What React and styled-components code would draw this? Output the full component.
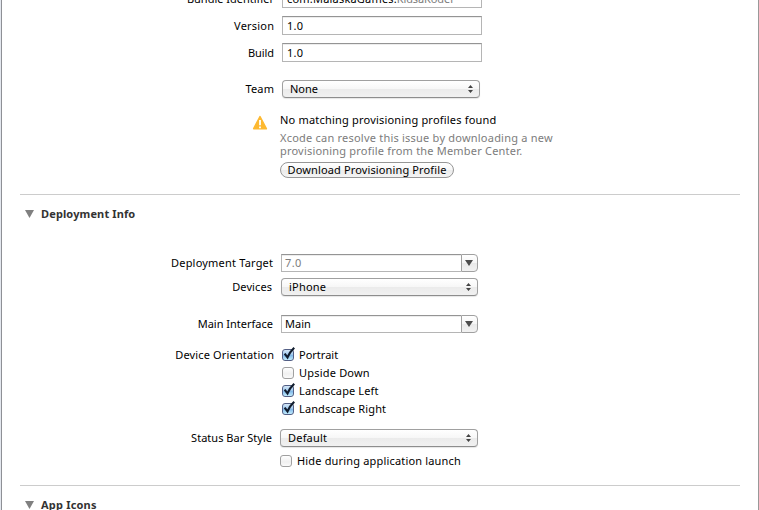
import React from "react";
import styled, { createGlobalStyle } from "styled-components";

const GlobalStyle = createGlobalStyle`
  *, *::before { box-sizing: border-box; }
  body {
    margin: 0;
    overflow: hidden;
    background: #fff;
    color: #000;
    font: 11px/14px "Noto Sans", "Open Sans", sans-serif;
  }
`;

const Gutter = styled.div`
  width: 759px;
  padding-left: 1px;
  background: #e3e7ee;
`;

const Editor = styled.main`
  width: 758px;
  height: 510px;
  overflow: hidden;
  padding: 0 18px;
  background: #fff;
  border-left: 1px solid #8e9096;
  border-right: 1px solid #999;
`;

const Row = styled.div`
  display: flex;
  align-items: ${(p) => (p.$top ? "flex-start" : "center")};
  height: ${(p) => p.$height || 19}px;
  margin-top: ${(p) => p.$gap || 0}px;
`;

const Label = styled.div`
  flex: none;
  width: ${(p) => p.$end - 20}px;
  margin-right: ${(p) => p.$space}px;
  line-height: 18px;
  text-align: right;
  white-space: nowrap;
`;

const Text = styled.span`
  letter-spacing: ${(p) => p.$track ?? 0.2}px;
  margin-right: ${(p) => -(p.$track ?? 0.2)}px;
  color: ${(p) => (p.$muted ? "#7c7c7c" : "inherit")};
  white-space: nowrap;
`;

const Field = styled.div`
  display: flex;
  align-items: center;
  width: 200px;
  height: 19px;
  padding-left: 4px;
  background: #fff;
  border: 1px solid #b5b5b5;
  border-top-color: #949494;
  box-shadow: inset 0 1px #ededed;
`;

const Popup = styled.div`
  display: flex;
  align-items: center;
  justify-content: space-between;
  width: ${(p) => p.$width}px;
  height: 18px;
  padding: 0 6px 0 7px;
  border: 1px solid #a0a0a0;
  border-bottom-color: #8d8d8d;
  border-radius: 4px;
  background: linear-gradient(#fff 0%, #f7f7f7 48%, #ebebeb 52%, #f1f1f1 100%);
  box-shadow: 0 1px 1px rgba(0, 0, 0, 0.1);
`;

const Combo = styled.div`
  display: flex;
  width: 197px;
  height: 18px;
`;

const ComboText = styled.div`
  display: flex;
  align-items: center;
  flex: 1;
  padding-left: 3px;
  border: 1px solid #b5b5b5;
  border-top-color: #949494;
  border-right: 0;
  box-shadow: inset 0 1px #ededed;
`;

const ComboButton = styled.div`
  display: flex;
  align-items: center;
  width: 17px;
  padding-left: 3px;
  border: 1px solid #a0a0a0;
  border-radius: 0 4px 4px 0;
  background: linear-gradient(#fff 0%, #f6f6f6 48%, #e9e9e9 52%, #f2f2f2 100%);
`;

const Notice = styled.section`
  display: flex;
  height: 65px;
  margin: 15px 0 0 232px;
`;

const NoticeIcon = styled.div`
  width: 28px;
  padding-top: 2px;
  svg { display: block; }
`;

const NoticeBody = styled.div`
  width: 300px;
`;

const Title = styled.div`
  height: 18px;
`;

const Detail = styled.div`
  height: 13px;
  line-height: 13px;
`;

const PushButton = styled.button`
  display: flex;
  align-items: center;
  justify-content: center;
  width: 174px;
  height: 16px;
  margin-top: 5px;
  padding: 0;
  font: inherit;
  color: #000;
  border: 1px solid #969696;
  border-radius: 8px;
  background: linear-gradient(#fff 0%, #f7f7f7 48%, #ebebeb 52%, #f4f4f4 100%);
`;

const Divider = styled.hr`
  width: 720px;
  height: 1px;
  margin: ${(p) => p.$gap}px 0 0;
  border: 0;
  background: #ccc;
`;

const Heading = styled.h2`
  display: flex;
  align-items: center;
  gap: 7px;
  height: 16px;
  margin: 11px 0 0;
  padding-left: 5px;
  font-size: 11px;
  font-weight: 700;
  color: #333;
`;

const Options = styled.div`
  display: flex;
  flex-direction: column;
`;

const Option = styled.div`
  display: flex;
  align-items: center;
  gap: 5px;
  height: 18px;
`;

const Box = styled.span`
  flex: none;
  width: 12px;
  height: 12px;
  border: 1px solid ${(p) => (p.$on ? "#535f85" : "#a0a0a0")};
  border-radius: 3px;
  background: ${(p) =>
    p.$on
      ? "linear-gradient(#d4e7f7 0%, #9dc7ed 48%, #80b6e7 52%, #c2eeff 100%)"
      : "linear-gradient(#fff, #f0f0f0 60%, #fafafa)"};
  svg { display: block; margin-top: -3px; overflow: visible; }
`;

const Updown = () => (
  <svg width="5" height="8" viewBox="0 0 5 8" fill="#444">
    <path d="M2.5 0 5 3H0zM0 5h5L2.5 8z" />
  </svg>
);

const Down = ({ width = 8, height = 6, color = "#4c4c4c" }) => (
  <svg width={width} height={height} viewBox="0 0 10 8" preserveAspectRatio="none" fill={color}>
    <path d="M0 0h10L5 8z" />
  </svg>
);

const Warning = () => (
  <svg width="16" height="16" viewBox="0 0 16 16">
    <path d="M8 1.8 14.2 13.6H1.8z" fill="#fdb931" stroke="#fdb931" strokeWidth="1.8" strokeLinejoin="round" />
    <path d="M8 5v5.2M8 11.4v1.8" stroke="#fff" strokeWidth="1.8" />
  </svg>
);

const Check = ({ on, track, children }) => (
  <Option>
    <Box $on={on}>
      {on && (
        <svg width="12" height="12" viewBox="0 0 12 12">
          <path d="M1.6 6.6 4.5 10.4Q6.7 5.1 11.2 0.8" fill="none" stroke="#101c2d" strokeWidth="2.2" />
        </svg>
      )}
    </Box>
    <Text $track={track}>{children}</Text>
  </Option>
);

const Section = ({ track, children }) => (
  <Heading>
    <Down width={9} height={8} color="#808080" />
    <Text $track={track}>{children}</Text>
  </Heading>
);

export default function App() {
  return (
    <>
      <GlobalStyle />
      <Gutter>
        <Editor>
          <Row $gap={-11}>
            <Label $end={274} $space={8}><Text $track={0}>Bundle Identifier</Text></Label>
            <Field><Text>com.MalaskaGames.</Text><Text $muted $track={-0.1}>KidsaKoder</Text></Field>
          </Row>
          <Row $gap={8}>
            <Label $end={274} $space={8}><Text>Version</Text></Label>
            <Field><Text>1.0</Text></Field>
          </Row>
          <Row $gap={8}>
            <Label $end={274} $space={8}><Text $track={-0.1}>Build</Text></Label>
            <Field><Text>1.0</Text></Field>
          </Row>
          <Row $gap={18} $height={18}>
            <Label $end={274} $space={8}><Text>Team</Text></Label>
            <Popup $width={198}><Text $track={0}>None</Text><Updown /></Popup>
          </Row>
          <Notice>
            <NoticeIcon><Warning /></NoticeIcon>
            <NoticeBody>
              <Title><Text>No matching provisioning profiles found</Text></Title>
              <Detail><Text $muted $track={0.22}>Xcode can resolve this issue by downloading a new</Text></Detail>
              <Detail><Text $muted>provisioning profile from the Member Center.</Text></Detail>
              <PushButton><Text $track={0.13}>Download Provisioning Profile</Text></PushButton>
            </NoticeBody>
          </Notice>
          <Divider $gap={16} />
          <Section track={0.13}>Deployment Info</Section>
          <Row $gap={32} $height={18}>
            <Label $end={273} $space={8}><Text>Deployment Target</Text></Label>
            <Combo><ComboText><Text $muted $track={0.4}>7.0</Text></ComboText><ComboButton><Down /></ComboButton></Combo>
          </Row>
          <Row $gap={6} $height={18}>
            <Label $end={272} $space={9}><Text $track={0.1}>Devices</Text></Label>
            <Popup $width={197}><Text>iPhone</Text><Updown /></Popup>
          </Row>
          <Row $gap={19} $height={18}>
            <Label $end={273} $space={8}><Text $track={0}>Main Interface</Text></Label>
            <Combo><ComboText><Text $track={0}>Main</Text></ComboText><ComboButton><Down /></ComboButton></Combo>
          </Row>
          <Row $gap={13} $height={72} $top>
            <Label $end={274} $space={8}><Text $track={0.15}>Device Orientation</Text></Label>
            <Options>
              <Check on track={0}>Portrait</Check>
              <Check>Upside Down</Check>
              <Check on track={0.13}>Landscape Left</Check>
              <Check on track={0.13}>Landscape Right</Check>
            </Options>
          </Row>
          <Row $gap={11} $height={18}>
            <Label $end={272} $space={8}><Text $track={0.03}>Status Bar Style</Text></Label>
            <Popup $width={198}><Text>Default</Text><Updown /></Popup>
          </Row>
          <Row $gap={5} $height={18}>
            <Label $end={272} $space={8} />
            <Check track={0.17}>Hide during application launch</Check>
          </Row>
          <Divider $gap={15} />
          <Section>App Icons</Section>
        </Editor>
      </Gutter>
    </>
  );
}
